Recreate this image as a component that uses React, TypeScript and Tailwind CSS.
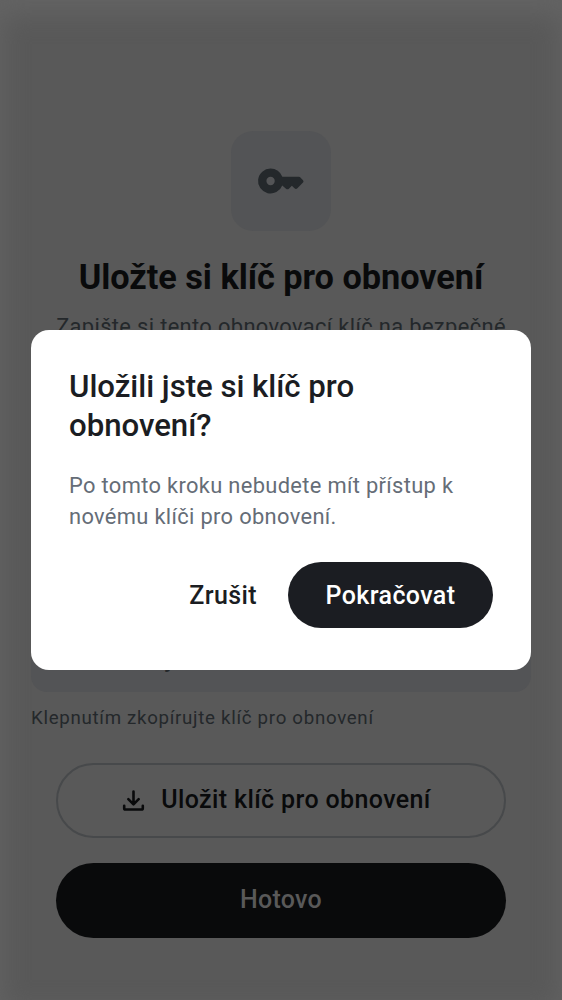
export default function App() {
  return (
    <div
      className="relative flex h-[1000px] w-[562px] flex-col items-center overflow-hidden bg-[#595959] pt-[131px] shadow-[inset_0_12px_24px_3px_#636363]"
      style={{ fontFamily: 'Roboto, sans-serif' }}
    >
      <div className="flex h-[100px] w-[100px] items-center justify-center rounded-[22px] bg-[#535456]">
        <svg width="50" height="50" viewBox="0 0 24 24" fill="#24282b">
          <path fillRule="evenodd" d="M7 6a6 6 0 0 1 5.65 4h7.95q.42 0 .72.3l1.25 1.3q.5.55 0 1.1l-2.7 2.8q-.7.7-1.4 0L17.2 14.3l-1.4 1.4q-.7.6-1.4 0L12.6 14.1A6 6 0 1 1 7 6m0 4a2 2 0 1 0 0 4a2 2 0 0 0 0-4" />
        </svg>
      </div>
      <h1 className="mt-[26px] h-10 whitespace-nowrap text-[34.3px] leading-10 font-bold tracking-[-0.04px] text-[#090a0b]">Uložte si klíč pro obnovení</h1>
      <p className="mt-[14px] h-[31px] whitespace-nowrap text-[21.86px] leading-[31px] tracking-[0.36px] text-[#24282b]">Zapište si tento obnovovací klíč na bezpečné</p>
      <div className="mt-[20px] flex h-[330px] w-[500px] items-end rounded-[16px] bg-[#535456] px-[25px] pb-[18px] text-[25px] leading-[30px] text-[#24282b]">
        <span className="ml-[110px]">j</span>
      </div>
      <p className="mt-[13px] h-[26px] w-[500px] text-[18.7px] leading-[26px] tracking-[0.7px] text-[#24282b]">Klepnutím zkopírujte klíč pro obnovení</p>
      <button className="mt-[31.5px] flex h-[75px] w-[450px] shrink-0 items-center justify-center gap-[12px] rounded-full border-2 border-[#47494b] pr-[13px] text-[25px] font-medium tracking-[0.37px] text-[#090a0b]">
        <svg width="31" height="31" viewBox="0 0 24 24" fill="none" stroke="currentColor" strokeWidth="2" strokeLinecap="round" strokeLinejoin="round">
          <path d="M12 5v9.5M8 11l4 4 4-4M4.8 16v2q0 1 1 1h12.4q1 0 1-1v-2" />
        </svg>
        Uložit klíč pro obnovení
      </button>
      <button className="mt-[25px] h-[75px] w-[450px] shrink-0 rounded-full bg-[#090a0b] text-[25px] font-medium tracking-[0.3px] text-[#595959]">Hotovo</button>
      <div role="dialog" className="absolute top-[330px] left-[31px] h-[340px] w-[500px] rounded-[18px] bg-white px-[38px] pt-[37px]">
        <h2 className="w-[330px] text-[31.2px] leading-[39px] font-medium tracking-[-0.03px] text-[#1b1d22]">Uložili jste si klíč pro obnovení?</h2>
        <p className="mt-[25px] text-[21.86px] leading-[31.2px] tracking-[0.34px] text-[#656d77]">Po tomto kroku nebudete mít přístup k<br />novému klíči pro obnovení.</p>
        <div className="mt-[30px] flex items-center justify-end gap-[31px]">
          <button className="text-[25px] font-medium tracking-[0.4px] text-[#1b1d22]">Zrušit</button>
          <button className="h-[66px] w-[205px] rounded-full bg-[#1b1d22] text-[25px] font-medium tracking-[0.38px] text-white">Pokračovat</button>
        </div>
      </div>
    </div>
  );
}
